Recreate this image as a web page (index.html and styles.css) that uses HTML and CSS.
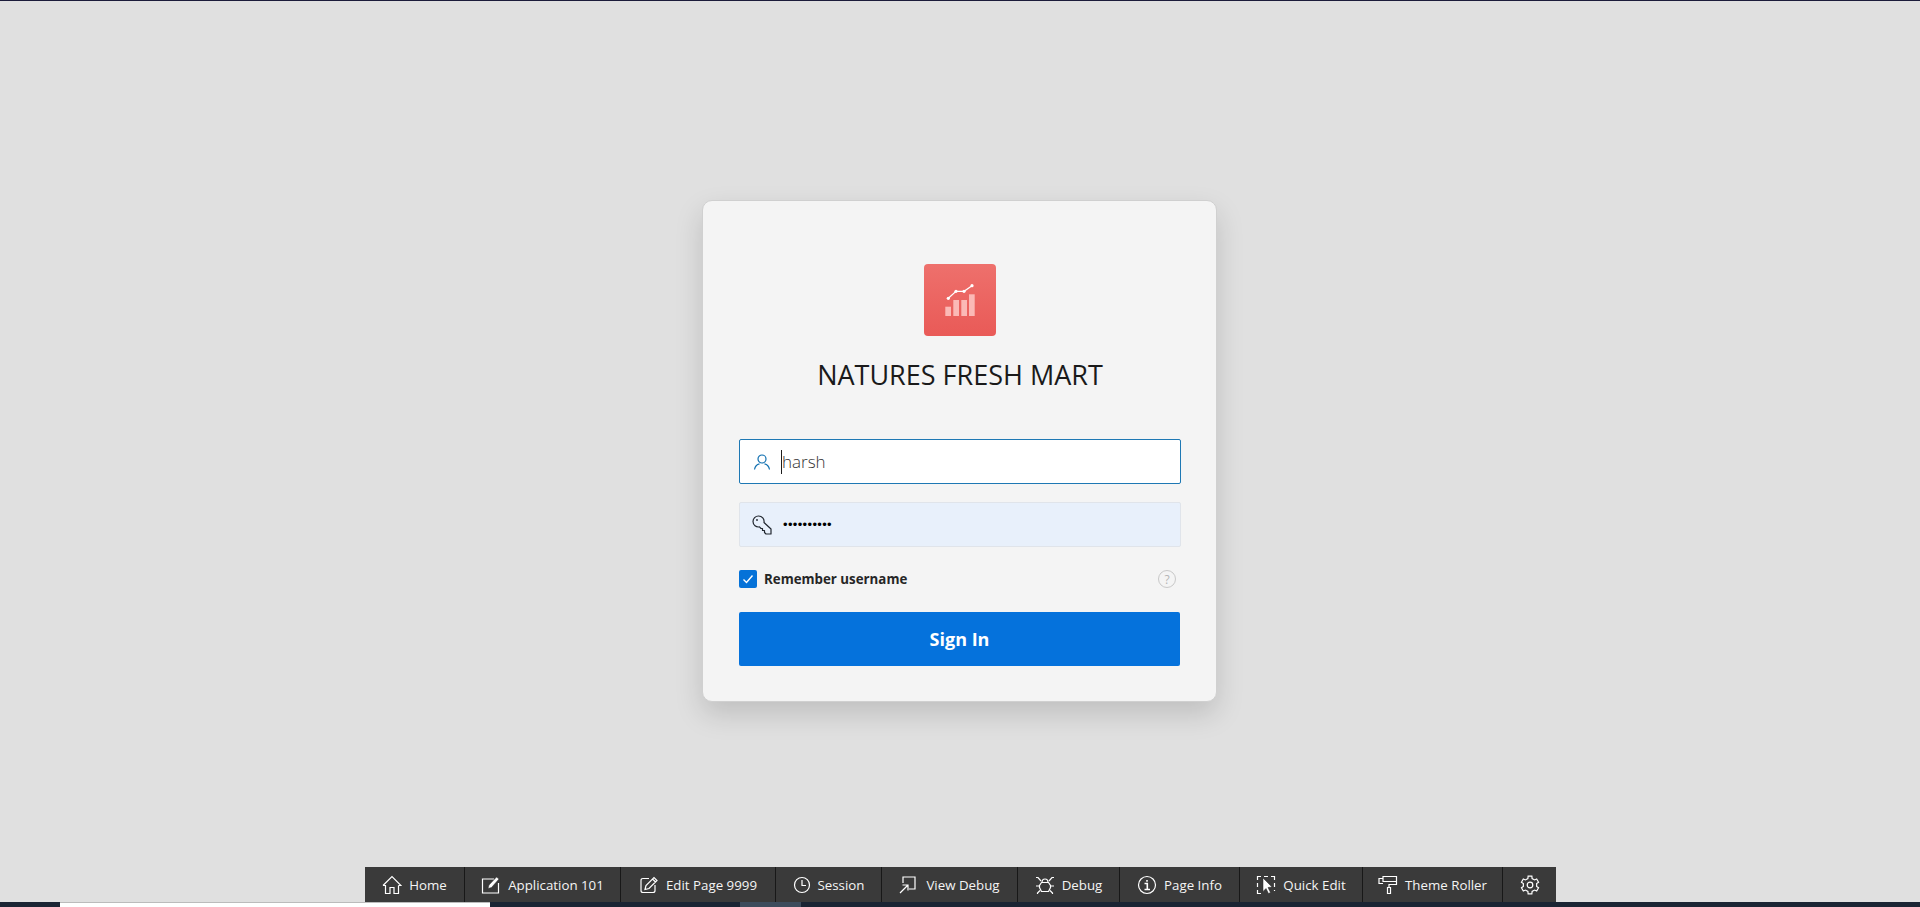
FILE: index.html
```html
<!DOCTYPE html>
<html lang="en">

<head>
    <meta charset="UTF-8">
    <title>Sign In</title>
    <link rel="stylesheet" href="styles.css">
</head>

<body>
    <div class="page">
        <main class="login-area">
            <div class="card">
                <div class="logo">
                    <svg width="36" height="36" viewBox="0 0 36 36">
                        <g fill="#fbb9b6">
                            <rect x="3.300" y="24.700" width="5.700" height="9.300" />
                            <rect x="11.300" y="18" width="5.700" height="16" />
                            <rect x="19.300" y="18" width="5.700" height="16" />
                            <rect x="27" y="12.300" width="5.700" height="21.700" />
                        </g>
                        <polyline points="6.300,16.300 14,9.300 22,9.300 30,3.700" fill="none" stroke="#fff" stroke-width="1.200" />
                        <g fill="#fff">
                            <circle cx="6.300" cy="16.300" r="1.600" />
                            <circle cx="14" cy="9.300" r="1.600" />
                            <circle cx="22" cy="9.300" r="1.600" />
                            <circle cx="30" cy="3.700" r="1.600" />
                        </g>
                    </svg>
                </div>
                <h1 class="title">NATURES FRESH MART</h1>

                <form class="login-form" onsubmit="return false">
                    <div class="field field-focus">
                        <svg class="field-icon" width="18" height="18" viewBox="0 0 18 18" fill="none" stroke="#0f6fb0" stroke-width="1.200">
                            <circle cx="9" cy="6" r="4" />
                            <path d="M1.500 16.500c.6-3.400 3-5.200 5-5.600M16.500 16.500c-.6-3.400-3-5.200-5-5.600" />
                        </svg>
                        <span class="caret"></span>
                        <span class="field-text">harsh</span>
                    </div>
                    <div class="field field-filled">
                        <svg class="field-icon key-icon" width="20" height="20" viewBox="0 0 20 20" fill="none" stroke="#20262e" stroke-width="1.200" stroke-linejoin="round">
                            <path d="M6.500 1A5.500 5.500 0 0 0 1 6.500 5.500 5.500 0 0 0 7.500 11.900L9 13.500h1.500v2h2v2l1.500 1.500H19v-5L12 7.500A5.500 5.500 0 0 0 6.500 1z" />
                            <circle cx="5" cy="5" r=".9" fill="#20262e" stroke="none" />
                        </svg>
                        <span class="dots">••••••••••</span>
                    </div>
                    <div class="remember-row">
                        <span class="checkbox">
                            <svg width="18" height="18" viewBox="0 0 18 18" fill="none" stroke="#fff" stroke-width="1.400">
                                <path d="M4.500 9.500l3 3 6-7" />
                            </svg>
                        </span>
                        <span class="remember-label">Remember username</span>
                        <span class="help">?</span>
                    </div>
                    <button class="sign-in" type="submit">Sign In</button>
                </form>
            </div>
        </main>

        <nav class="dev-bar">
            <a class="dev-item item-home" href="#">
                <svg width="20" height="20" viewBox="0 0 20 20"><path d="M1 10.500L10 1.500l9 9-2.500 0M1 10.500h2.500V18.500H8v-6h4v6h4.500V10.500" /></svg>
                Home
            </a>
            <a class="dev-item item-app" href="#">
                <svg width="20" height="20" viewBox="0 0 20 20"><path d="M13 4H1.500v14h16V8" /><path class="solid" d="M7 13.500l1-3.500 7.500-8 2.500 2-7.500 8.500z" /></svg>
                Application 101
            </a>
            <a class="dev-item item-edit" href="#">
                <svg width="20" height="20" viewBox="0 0 20 20"><path d="M10 3.500H4Q2 3.500 2 5.500v10q0 2 2 2h10q2 0 2-2V10M7 10.500l-1 4 4-1 8-8-3-3zM13.500 4l3 3" /></svg>
                Edit Page 9999
            </a>
            <a class="dev-item item-session" href="#">
                <svg width="18" height="18" viewBox="0 0 18 18"><circle cx="9" cy="9" r="7.500" /><path d="M9 4v5.500h4" /></svg>
                Session
            </a>
            <a class="dev-item item-view" href="#">
                <svg width="20" height="20" viewBox="0 0 20 20"><path d="M4 8V2h12v12h-6M1 18l8-8M3.500 10H9v5.500" /></svg>
                View Debug
            </a>
            <a class="dev-item item-debug" href="#">
                <svg width="20" height="20" viewBox="0 0 20 20"><path d="M6.500 7.500h7l2 3v2l-2 4h-7l-2-4v-2zM7 7.500C7 5 8 4 10 4s3 1 3 3.500M1 11h3.500M15.500 11H19M6 6L3 2.500H1M14 6l3-3.500h2M5 15.500L2.500 18v1M15 15.500l2.500 2.500v1" /></svg>
                Debug
            </a>
            <a class="dev-item item-info" href="#">
                <svg width="20" height="20" viewBox="0 0 20 20"><circle cx="10" cy="10" r="8.500" /><path class="thick" d="M7.500 8.500h2.800v6M7.500 14.500h5.500M10 5v1.800" /></svg>
                Page Info
            </a>
            <a class="dev-item item-quick" href="#">
                <svg width="20" height="20" viewBox="0 0 20 20"><path d="M1.500 5V1.500H5M8 1.500h4M15 1.500h3.500V5M18.500 8v4M1.500 8v4M1.500 15v3.500H5M18.500 15v1" /><path class="solid" d="M7 3l9 9-4 .5 2.500 5-2 1-2.500-5-3 3z" /></svg>
                Quick Edit
            </a>
            <a class="dev-item item-theme" href="#">
                <svg width="20" height="20" viewBox="0 0 20 20"><path d="M5 3.500H1v5h4M5 1.500h13.500v5H5zM18.500 6.500V9.500H11v3M9.500 12.500h3v6h-3z" /></svg>
                Theme Roller
            </a>
            <a class="dev-item item-gear" href="#">
                <svg width="20" height="20" viewBox="0 0 20 20"><circle cx="10" cy="10" r="2.800" /><path d="M7.900 3.530L8.130 1.200h3.740l.23 2.330 2.450 1.420 2.140-.97 1.870 3.240-1.910 1.370v2.820l1.910 1.370-1.870 3.240-2.140-.97-2.450 1.420-.23 2.330H8.130l-.23-2.330-2.450-1.420-2.140.97-1.870-3.240 1.910-1.370V8.590L1.440 7.220l1.870-3.240 2.140.97z" /></svg>
            </a>
        </nav>

        <div class="bottom-strip">
            <span class="strip-white"></span>
            <span class="strip-tab"></span>
        </div>
    </div>
</body>

</html>
```

FILE: styles.css
```css
* {
    margin: 0;
    padding: 0;
    box-sizing: border-box;
}

body {
    font-family: "Open Sans", "Noto Sans", sans-serif;
    background-color: #e0e0e0;
    color: #262626;
}

.page {
    height: 907px;
    display: flex;
    flex-direction: column;
    overflow: hidden;
    border-top: 1px solid #1b1b3a;
}

.login-area {
    flex: 1;
    padding-top: 199px;
}

.card {
    width: 515px;
    height: 502px;
    margin-left: 702px;
    padding: 63px 35px 0 36px;
    background-color: #f4f4f4;
    border: 1px solid #d0d0d0;
    border-radius: 10px;
    box-shadow: 0 12px 28px rgba(0, 0, 0, .15);
}

.logo {
    width: 72px;
    height: 72px;
    margin-left: 185px;
    display: flex;
    align-items: center;
    justify-content: center;
    border-radius: 4px;
    background: linear-gradient(#ee706c, #e95a57);
}

.title {
    margin-top: 21px;
    font-size: 27px;
    line-height: 36px;
    font-weight: 400;
    text-align: center;
    color: #1a1a1a;
}

.login-form {
    margin-top: 46px;
    width: 442px;
}

.field {
    height: 45px;
    display: flex;
    align-items: center;
    padding-left: 13px;
    margin-bottom: 18px;
    border-radius: 2px;
}

.field-focus {
    background-color: #fff;
    border: 1px solid #1e78b4;
}

.field-filled {
    background-color: #e8f0fb;
    border: 1px solid #e0e4ea;
}

.field-icon {
    flex: none;
}

.caret {
    width: 1px;
    height: 24px;
    margin-left: 10px;
    background-color: #1c1c1c;
}

.field-text {
    font-size: 17px;
    font-weight: 300;
    color: #333;
}

.key-icon {
    margin-left: -1px;
}

.dots {
    margin-left: 11px;
    font-family: "Liberation Sans", sans-serif;
    font-size: 13px;
    letter-spacing: .35px;
    color: #000;
}

.remember-row {
    height: 18px;
    margin-top: 23px;
    display: flex;
    align-items: center;
}

.checkbox {
    width: 18px;
    height: 18px;
    border-radius: 2px;
    background-color: #0572d8;
}

.checkbox svg {
    display: block;
}

.remember-label {
    margin-left: 7px;
    font-size: 13.300px;
    font-weight: 700;
    color: #262626;
}

.help {
    width: 18px;
    height: 18px;
    margin-left: auto;
    margin-right: 5px;
    display: flex;
    align-items: center;
    justify-content: center;
    border: 1px solid #c8c8c8;
    border-radius: 50%;
    font-size: 12px;
    color: #b4b4b4;
}

.sign-in {
    display: block;
    width: 441px;
    height: 54px;
    margin-top: 24px;
    border: none;
    border-radius: 2px;
    background-color: #0572dc;
    color: #fff;
    font-family: inherit;
    font-size: 18px;
    font-weight: 700;
}

/* developer toolbar */
.dev-bar {
    width: 1191px;
    height: 35px;
    margin-left: 365px;
    display: flex;
    background-color: #3a3a3a;
}

.dev-item {
    display: flex;
    align-items: center;
    justify-content: center;
    gap: 7px;
    border-right: 1px solid #181818;
    font-size: 13.300px;
    color: #f4f4f4;
    text-decoration: none;
}

.dev-item svg {
    flex: none;
    fill: none;
    stroke: #fff;
    stroke-width: 1.200;
}

.dev-item svg .solid {
    fill: #fff;
    stroke: #2a2a2a;
    stroke-width: .5;
}

.dev-item svg .thick {
    stroke-width: 1.600;
}

.item-home { width: 100px; }
.item-app { width: 156px; }
.item-edit { width: 155px; }
.item-session { width: 106px; }
.item-view { width: 136px; }
.item-debug { width: 102px; }
.item-info { width: 120px; }
.item-quick { width: 123px; }
.item-theme { width: 140px; }
.item-gear { width: 53px; border-right: none; }

.bottom-strip {
    height: 5px;
    display: flex;
    background-color: #1a2433;
}

.strip-white {
    width: 430px;
    margin-left: 60px;
    background-color: #fff;
    border-top: 1px solid #bbb;
}

.strip-tab {
    width: 61px;
    margin-left: 250px;
    background-color: #3d4c5c;
}
```
